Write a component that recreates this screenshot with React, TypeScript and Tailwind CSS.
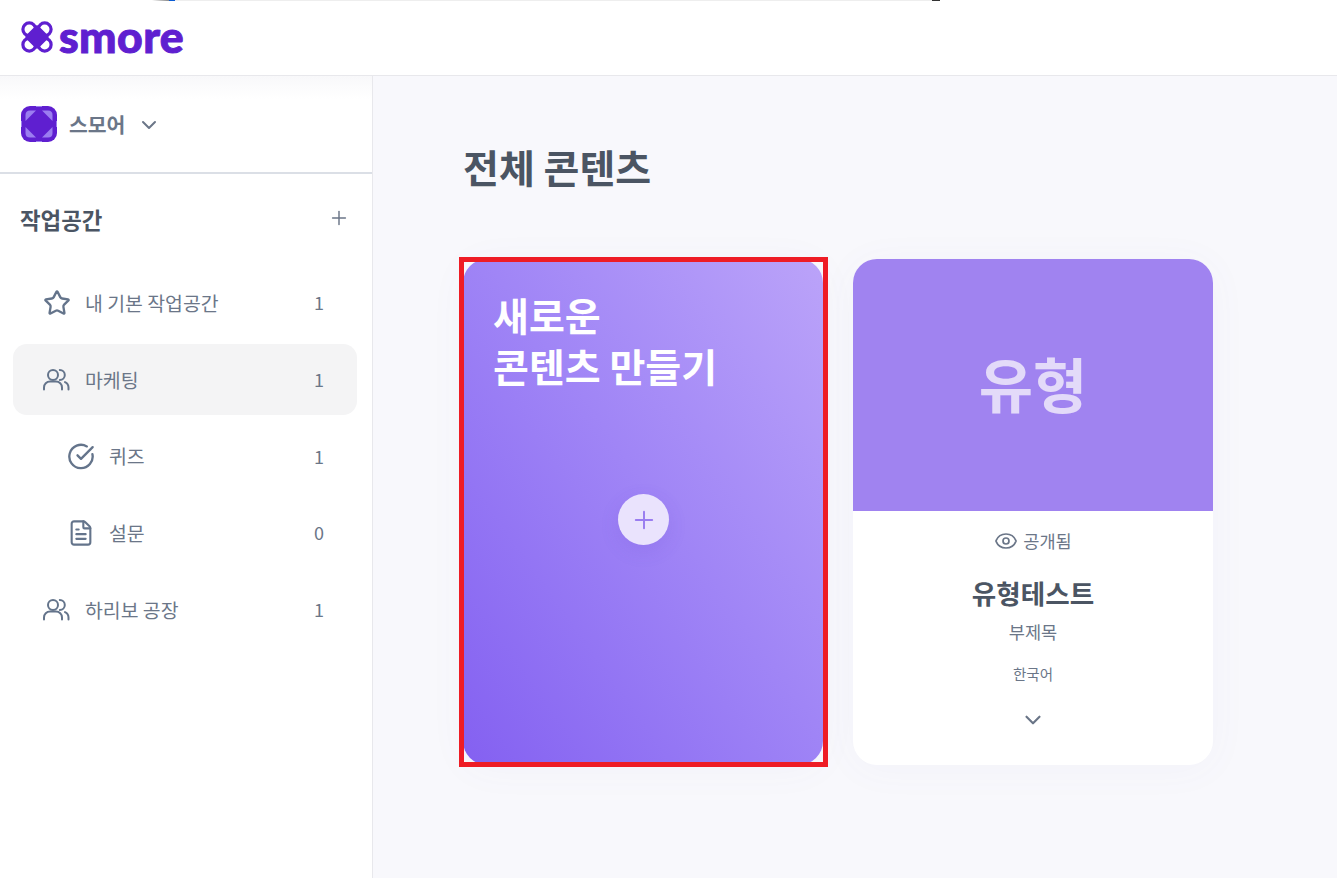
import { Star, CircleCheckBig, FileText, ChevronDown, Plus, Eye } from "lucide-react";
import type { ReactNode } from "react";

function LogoMark() {
  return (
    <svg width="32" height="32" viewBox="0 0 32 32" fill="none">
      <g stroke="#5f1fd0" strokeWidth="3.2">
        <circle cx="8.3" cy="8.3" r="6.4" />
        <circle cx="23.7" cy="8.3" r="6.4" />
        <circle cx="8.3" cy="23.7" r="6.4" />
        <circle cx="23.7" cy="23.7" r="6.4" />
      </g>
      <rect x="7" y="7" width="18" height="18" rx="3" fill="#5f1fd0" transform="rotate(45 16 16)" />
    </svg>
  );
}

function WorkspaceMark() {
  return (
    <svg width="36" height="36" viewBox="0 0 36 36">
      <rect width="36" height="36" rx="9" fill="#5f1fd0" />
      <g fill="#9b7df0">
        <path d="M15 4.5 L4.5 15 L4.5 9 Q4.5 4.5 9 4.5Z" />
        <path d="M21 4.5 L31.5 15 L31.5 9 Q31.5 4.5 27 4.5Z" />
        <path d="M15 31.5 L4.5 21 L4.5 27 Q4.5 31.5 9 31.5Z" />
        <path d="M21 31.5 L31.5 21 L31.5 27 Q31.5 31.5 27 31.5Z" />
        <rect x="15" y="0" width="6" height="1" />
        <rect x="15" y="35" width="6" height="1" />
        <rect x="0" y="15" width="1" height="6" />
        <rect x="35" y="15" width="1" height="6" />
      </g>
    </svg>
  );
}

function UsersIcon() {
  return (
    <svg width="28" height="23" viewBox="1 0 28 23" fill="none" stroke="currentColor" strokeWidth="2" strokeLinecap="round">
      <circle cx="11" cy="7" r="5" />
      <path d="M2 21.5 v-2 a6 6 0 0 1 6-6 h6 a6 6 0 0 1 6 6 v2" />
      <path d="M17.8 2 a5 5 0 0 1 0 10" />
      <path d="M26.5 21.5 v-2 a6 6 0 0 0-3.5-5.4" />
    </svg>
  );
}

function Row({ icon, label, count, sub, active }: { icon: ReactNode; label: string; count: number; sub?: boolean; active?: boolean }) {
  return (
    <div className={`flex h-[71px] items-center rounded-[14px] pr-[33px] ${sub ? "pl-[54px]" : "pl-[30px]"} ${active ? "bg-[#f4f4f5]" : ""}`}>
      <span className="flex w-[28px] justify-center text-[#64748b]">{icon}</span>
      <span className="ml-[14px] flex-1 text-[19.4px] text-[#6b7688]">{label}</span>
      <span className="text-[18px] text-[#6b7688]">{count}</span>
    </div>
  );
}

export default function App() {
  return (
    <div className="flex h-[878px] w-[1337px] flex-col overflow-hidden bg-white font-['Noto_Sans_CJK_KR',sans-serif]">
      <div className="ml-[152px] flex h-px w-[788px] bg-[#eeeeee]">
        <div className="w-[17px] bg-gradient-to-r from-[#ffffff] to-[#888888]" />
        <div className="w-[6px] bg-[#0a5bd3]" />
        <div className="flex-1" />
        <div className="w-[8px] bg-[#333333]" />
      </div>
      <header className="flex h-[75px] shrink-0 items-center gap-[6px] border-b border-[#e8e8ec] pb-[3px] pl-[21px]">
        <LogoMark />
        <span className="font-['Lato',sans-serif] text-[44.5px] leading-none font-black tracking-[0.4px] text-[#5f1fd0] [-webkit-text-stroke:1px_#5f1fd0]">smore</span>
      </header>
      <div className="flex min-h-0 flex-1">
        <aside className="w-[373px] shrink-0 border-r border-[#e8e8ec]">
          <div className="flex h-[98px] items-center border-b-2 border-[#dbdfe6] bg-gradient-to-b from-[#f8f8fa] to-[#ffffff] to-[24%] pl-[21px]">
            <WorkspaceMark />
            <span className="ml-[12px] text-[20.4px] font-bold text-[#6b7688]">스모어</span>
            <ChevronDown className="ml-[12px] mt-[2px] text-[#6b7688]" size={24} strokeWidth={2} />
          </div>
          <div className="flex h-[93px] items-center justify-between pb-[2px] pl-[20px] pr-[22px]">
            <span className="text-[22.4px] font-bold text-[#4b5563]">작업공간</span>
            <Plus className="mb-[3px] text-[#6b7688]" size={22} strokeWidth={1.6} />
          </div>
          <div className="flex flex-col gap-[5.75px] pl-[13px] pr-[15px]">
            <Row icon={<Star size={28} strokeWidth={2} />} label="내 기본 작업공간" count={1} />
            <Row icon={<UsersIcon />} label="마케팅" count={1} active />
            <Row icon={<CircleCheckBig size={29} strokeWidth={2} />} label="퀴즈" count={1} sub />
            <Row icon={<FileText size={30} strokeWidth={1.8} />} label="설문" count={0} sub />
            <Row icon={<UsersIcon />} label="하리보 공장" count={1} />
          </div>
        </aside>
        <main className="min-w-0 flex-1 bg-[#f8f8fc] pl-[90px]">
          <h1 className="mt-[58px] text-[39px] leading-[64px] font-bold text-[#4b5563]">전체 콘텐츠</h1>
          <div className="mt-[61px] flex gap-[30px]">
            <div className="relative h-[506px] w-[360px]">
              <div className="flex h-full flex-col rounded-[24px] bg-gradient-to-tr from-[#8460f1] to-[#bba3f9] pl-[30px] pt-[30px] shadow-[0_4px_40px_rgba(100,100,180,0.04)]">
                <div className="text-[39px] leading-[51px] font-bold text-white">
                  새로운
                  <br />
                  콘텐츠 만들기
                </div>
                <div className="mt-[103px] ml-[125px] flex h-[51px] w-[51px] items-center justify-center rounded-full bg-[#eae3fd] text-[#9a7df0] shadow-[0_6px_20px_rgba(90,60,200,0.12)]">
                  <Plus size={28} strokeWidth={1.7} />
                </div>
              </div>
              <div className="pointer-events-none absolute -top-[2px] -bottom-[2px] -left-[4px] -right-[5px] border-[5px] border-[#ee1c25]" />
            </div>
            <div className="flex h-[506px] w-[360px] flex-col items-center overflow-hidden rounded-[24px] bg-white shadow-[0_4px_40px_rgba(100,100,180,0.04)]">
              <div className="flex h-[252px] w-full shrink-0 items-center justify-center bg-[#a083f0] pb-[3px] text-[59px] font-bold text-[#e3daf9]">유형</div>
              <div className="mt-[17px] flex h-[26px] items-center gap-[5px] text-[#6b7688]">
                <Eye size={24} strokeWidth={1.7} />
                <span className="text-[17.6px]">공개됨</span>
              </div>
              <div className="mt-[19px] text-[26.6px] leading-[40px] font-bold text-[#4b5563]">유형테스트</div>
              <div className="mt-[6px] text-[17.6px] leading-[26px] text-[#6b7688]">부제목</div>
              <div className="mt-[18px] text-[14.5px] leading-[22px] text-[#6b7688]">한국어</div>
              <ChevronDown className="mt-[22px] text-[#6b7688]" size={26} strokeWidth={2} />
            </div>
          </div>
        </main>
      </div>
    </div>
  );
}
